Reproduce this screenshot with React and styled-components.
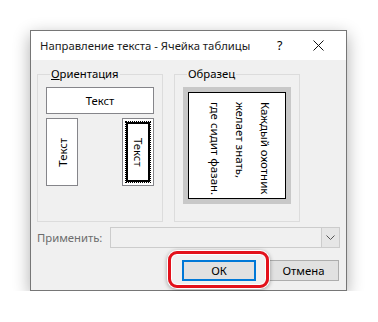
import React from "react";
import styled, { createGlobalStyle } from "styled-components";

const GlobalStyle = createGlobalStyle`
  body {
    margin: 0;
    background: #ffffff;
    font-family: "Noto Sans", "Liberation Sans", sans-serif;
    font-size: 11.3px;
    color: #000;
  }
`;

const Page = styled.div`
  padding: 30px 0 0 30px;
`;

const Dialog = styled.div`
  width: 317px;
  height: 261px;
  box-sizing: border-box;
  border: 1px solid #767676;
  background: #f0f0f0;
  box-shadow: 0 5px 16px rgba(0, 0, 0, 0.32);
  display: flex;
  flex-direction: column;
`;

const TitleBar = styled.div`
  height: 29px;
  background: #ffffff;
  display: flex;
  align-items: center;
  padding-left: 9px;
`;

const Title = styled.span`
  flex: 1;
  font-size: 11.3px;
  color: #1a1a1a;
`;

const HelpGlyph = styled.span`
  width: 20px;
  font-size: 12.5px;
  margin-right: 16px;
`;

const CloseButton = styled.span`
  width: 14px;
  margin-right: 19px;
  display: flex;
  align-items: center;
`;

const Body = styled.div`
  flex: 1;
  display: flex;
  flex-direction: column;
  padding: 6px 6px 0 6px;
`;

const GroupsRow = styled.div`
  display: flex;
  gap: 11px;
`;

const Group = styled.fieldset`
  margin: 0;
  width: ${({ $w }) => $w}px;
  height: 156px;
  box-sizing: border-box;
  border: 1px solid #dcdcdc;
  padding: 5px 8px 0 8px;
`;

const Legend = styled.legend`
  margin-left: 4px;
  padding: 0 1px;
  font-size: 11.3px;
  line-height: 16px;
`;

const Key = styled.span`
  text-decoration: underline;
`;

const OrientationGrid = styled.div`
  display: flex;
  flex-direction: column;
  gap: 4px;
`;

const WideOption = styled.div`
  width: 108px;
  height: 27px;
  box-sizing: border-box;
  border: 1px solid #85858a;
  background: #fff;
  display: flex;
  align-items: center;
  justify-content: center;
`;

const TallRow = styled.div`
  width: 108px;
  display: flex;
  justify-content: space-between;
`;

const TallOption = styled.div`
  width: 32px;
  height: 68px;
  box-sizing: border-box;
  border: 1px solid #85858a;
  background: #fff;
  padding: ${({ $selected }) => ($selected ? "2px" : "0")};
  display: flex;
`;

const TallInner = styled.div`
  flex: 1;
  display: flex;
  align-items: center;
  justify-content: center;
  box-sizing: border-box;
  border: ${({ $selected }) => ($selected ? "1px dotted #000" : "none")};
  box-shadow: ${({ $selected }) => ($selected ? "inset 0 0 0 2px #000" : "none")};
`;

const VerticalText = styled.span`
  writing-mode: vertical-rl;
  transform: ${({ $up }) => ($up ? "rotate(180deg)" : "none")};
`;

const PreviewFrame = styled.div`
  width: 108px;
  height: 117px;
  box-sizing: border-box;
  background: #c8c8c8;
  padding: 5px;
`;

const PreviewPage = styled.div`
  width: 98px;
  height: 107px;
  box-sizing: border-box;
  background: #fff;
  border: 1px solid #000;
  display: flex;
  justify-content: flex-end;
  padding: 9px 7px 0 0;
`;

const PreviewText = styled.div`
  writing-mode: vertical-rl;
  white-space: nowrap;
  line-height: 25px;
  font-size: 11.5px;
`;

const ApplyRow = styled.div`
  display: flex;
  align-items: center;
  margin-top: 5px;
  height: 21px;
`;

const ApplyLabel = styled.span`
  width: 73px;
  color: #6d6d6d;
`;

const Combo = styled.div`
  width: 231px;
  height: 21px;
  box-sizing: border-box;
  border: 1px solid #cccccc;
  background: #f0f0f0;
  display: flex;
  justify-content: flex-end;
`;

const ComboArrow = styled.div`
  width: 17px;
  border-left: 1px solid #cccccc;
  background: #e6e6e6;
  display: flex;
  align-items: center;
  justify-content: center;
`;

const ButtonRow = styled.div`
  display: flex;
  justify-content: flex-end;
  gap: 12px;
  margin-top: 12px;
  padding-right: 1px;
`;

const ButtonSlot = styled.div`
  position: relative;
`;

const Button = styled.div`
  width: ${({ $w }) => $w}px;
  height: 21px;
  box-sizing: border-box;
  background: #e1e1e1;
  border: ${({ $default }) => ($default ? "2px solid #0078d7" : "1px solid #adadad")};
  display: flex;
  align-items: center;
  justify-content: center;
`;

const Highlight = styled.div`
  position: absolute;
  left: -14px;
  top: -9px;
  width: 101px;
  height: 37px;
  box-sizing: border-box;
  border: 3px solid #e3111b;
  border-radius: 9px;
  box-shadow: 0 0 0 1px #fff, inset 0 0 0 1px #fff, 0 1px 4px 1px rgba(0, 0, 0, 0.35);
  pointer-events: none;
`;

export default function App() {
  return (
    <Page>
      <GlobalStyle />
      <Dialog>
        <TitleBar>
          <Title>Направление текста - Ячейка таблицы</Title>
          <HelpGlyph>?</HelpGlyph>
          <CloseButton>
            <svg width="11" height="11" viewBox="0 0 11 11">
              <path d="M0.5 0.5 L10.5 10.5 M10.5 0.5 L0.5 10.5" stroke="#111" strokeWidth="1" />
            </svg>
          </CloseButton>
        </TitleBar>
        <Body>
          <GroupsRow>
            <Group $w={125}>
              <Legend>
                <Key>О</Key>риентация
              </Legend>
              <OrientationGrid>
                <WideOption>Текст</WideOption>
                <TallRow>
                  <TallOption>
                    <TallInner>
                      <VerticalText $up>Текст</VerticalText>
                    </TallInner>
                  </TallOption>
                  <TallOption $selected>
                    <TallInner $selected>
                      <VerticalText>Текст</VerticalText>
                    </TallInner>
                  </TallOption>
                </TallRow>
              </OrientationGrid>
            </Group>
            <Group $w={124}>
              <Legend>Образец</Legend>
              <PreviewFrame>
                <PreviewPage>
                  <PreviewText>
                    Каждый охотник
                    <br />
                    желает знать,
                    <br />
                    где сидит фазан.
                  </PreviewText>
                </PreviewPage>
              </PreviewFrame>
            </Group>
          </GroupsRow>
          <ApplyRow>
            <ApplyLabel>Применить:</ApplyLabel>
            <Combo>
              <ComboArrow>
                <svg width="9" height="5" viewBox="0 0 9 5">
                  <path d="M0.5 0.5 L4.5 4.5 L8.5 0.5" fill="none" stroke="#555" strokeWidth="1" />
                </svg>
              </ComboArrow>
            </Combo>
          </ApplyRow>
          <ButtonRow>
            <ButtonSlot>
              <Button $w={74} $default>
                ОК
              </Button>
              <Highlight />
            </ButtonSlot>
            <Button $w={71}>Отмена</Button>
          </ButtonRow>
        </Body>
      </Dialog>
    </Page>
  );
}
